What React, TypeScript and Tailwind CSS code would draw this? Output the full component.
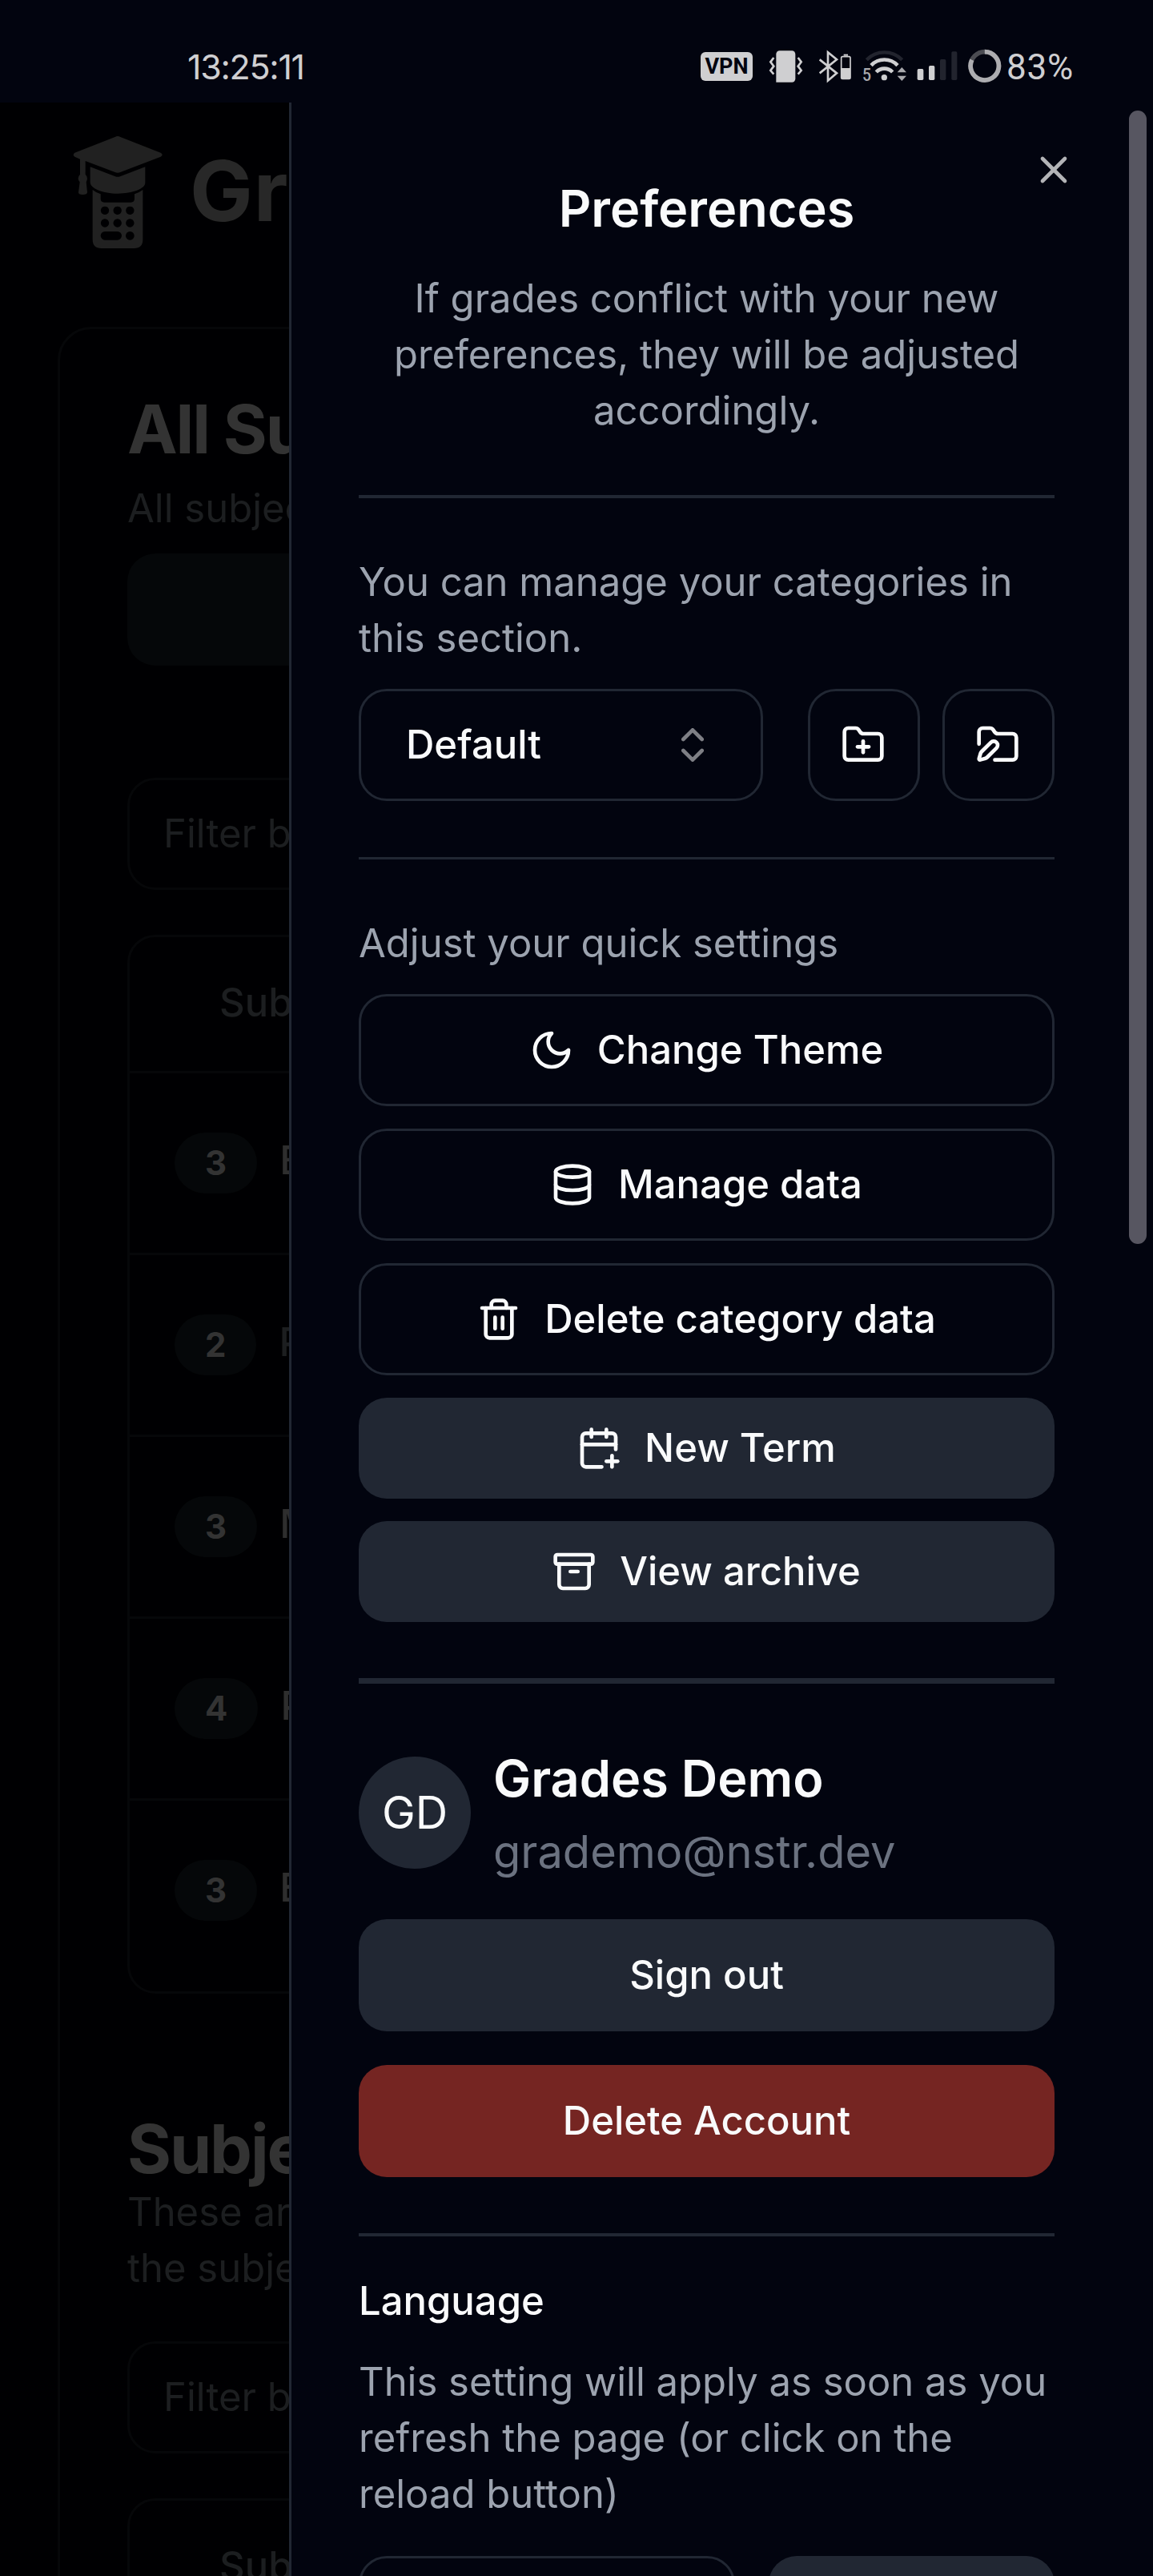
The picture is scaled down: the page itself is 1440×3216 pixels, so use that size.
import type { ReactNode } from "react";
import {
  Archive,
  CalendarPlus,
  ChevronsUpDown,
  Database,
  FolderPen,
  FolderPlus,
  Trash2,
  X,
} from "lucide-react";

const LIGHT = "#cfcfd1";
const DIM = "#22242e";

function StatusBar() {
  return (
    <header className="flex h-[128px] shrink-0 items-start bg-[#02040f] pl-[234px] pt-[60px] text-[#cfcfd1]">
      <span className="mt-px w-[641px] font-[Inter] text-[43px] leading-[44px] tracking-[-1.300px]">13:25:11</span>
      <span className="mt-[5px] flex h-[36px] w-[65px] items-center justify-center rounded-[6px] bg-[#cfcfd1] font-[Roboto] text-[27px] font-bold leading-none text-[#02040f]">
        VPN
      </span>
      <svg className="ml-[20px] h-[45px] w-[43px]" viewBox="285 30 129 135" fill="none">
        <path d="M326 40h46a13 13 0 0 1 13 13v92a13 13 0 0 1-13 13h-59V53a13 13 0 0 1 13-13Z" fill={LIGHT} />
        <path d="M304 66l-12 16 12 16-12 16 12 14M395 66l12 16-12 16 12 16-12 14" stroke={LIGHT} strokeWidth="8" />
      </svg>
      <svg className="ml-[18px] h-[45px] w-[43px]" viewBox="468 30 129 135" fill="none">
        <path d="M476 73l64 51-33 28V46l33 27-64 51" stroke={LIGHT} strokeWidth="8" />
        <rect x="557" y="62" width="34" height="83" rx="5" stroke={LIGHT} strokeWidth="5" />
        <rect x="566" y="53" width="16" height="6" fill={LIGHT} />
        <path d="M557 105h34v39h-34z" fill={LIGHT} />
      </svg>
      <svg className="ml-[12px] h-[45px] w-[58px]" viewBox="633 30 174 135" fill="none">
        <path d="M652 74a93 93 0 0 1 133 0" stroke={DIM} strokeWidth="13" />
        <path d="M669 95a68 68 0 0 1 99 0" stroke={LIGHT} strokeWidth="14" />
        <path d="M688 120a42 42 0 0 1 61 0" stroke={LIGHT} strokeWidth="14" />
        <circle cx="718" cy="140" r="11" fill={LIGHT} />
        <path d="M784 102l17 19h-34zM784 153l-17-19h34z" fill="#a9a9ad" />
        <text x="636" y="153" fontFamily="Roboto" fontWeight="500" fontSize="64" textLength="33" lengthAdjust="spacingAndGlyphs" fill="#a9a9ad">5</text>
      </svg>
      <svg className="ml-[10px] h-[45px] w-[54px]" viewBox="836 30 162 135">
        <rect x="841" y="108" width="23" height="42" rx="5" fill={LIGHT} />
        <rect x="884" y="96" width="22" height="54" rx="5" fill={LIGHT} />
        <rect x="926" y="72" width="22" height="78" rx="5" fill={DIM} />
        <rect x="969" y="43" width="21" height="107" rx="5" fill={DIM} />
      </svg>
      <svg className="ml-[10px] h-[45px] w-[44px]" viewBox="1028 30 132 135" fill="none">
        <circle cx="1093.500" cy="97" r="53" stroke="#4b4c52" strokeWidth="17" />
        <path d="M1093.500 44a53 53 0 1 1-48 30" stroke="#adadb0" strokeWidth="17" />
      </svg>
      <span className="ml-[5px] mt-[2px] font-[Roboto] text-[44px] leading-[44px] tracking-[0.800px]">83%</span>
    </header>
  );
}

function Logo() {
  return (
    <svg className="h-[160px] w-[140px] shrink-0" viewBox="0 0 420 480" fill="#212121">
      <path d="M191 33q10-6 20 0l151 59q12 7 0 15l-151 58q-10 5-20 0L80 123v50q8 8 7 16-1 8-4 13l4 38q0 9-17 9t-16-9l5-38q-6-6-6-14t7-15v-57l-20-9q-10-7 0-15Z" />
      <path d="M98 145l94 36q9 3 18 0l94-36v60c0 22-48 40-103 40S98 225 98 203Z" />
      <path
        fillRule="evenodd"
        d="M107 231q12 10 30 16v17q0 14 14 14h99q14 0 14-14v-17q18-6 31-16v186q0 33-33 33H140q-33 0-33-33ZM153 293a15.500 15.500 0 1 0 .1 0ZM200 293a15.500 15.500 0 1 0 .1 0ZM247 293a15.500 15.500 0 1 0 .1 0ZM153 340a15.500 15.500 0 1 0 .1 0ZM200 340a15.500 15.500 0 1 0 .1 0ZM247 340a15.500 15.500 0 1 0 .1 0ZM153 387a16 16 0 0 0 0 32h47a16 16 0 0 0 0-32ZM247 387a16 16 0 1 0 .1 0Z"
      />
    </svg>
  );
}

const subjects = [
  { count: 3, name: "Biology", muted: false },
  { count: 2, name: "Physics", muted: true },
  { count: 3, name: "Maths", muted: false },
  { count: 4, name: "Physics", muted: false },
  { count: 3, name: "English", muted: false },
];

function FilterInput() {
  return (
    <div className="flex h-[140px] shrink-0 items-center rounded-[35px] border-[3px] border-[#060709] pl-[42px] text-[49px] text-[#1c1e20]">
      Filter by subject
    </div>
  );
}

function DimmedPage() {
  return (
    <main className="flex w-[361px] shrink-0 flex-col overflow-hidden bg-[#000002] whitespace-nowrap">
      <div className="flex w-[1360px] shrink-0 pl-[80px] pt-[32px]">
        <Logo />
        <span className="ml-[17px] mt-[18px] text-[105px] font-bold leading-[120px] tracking-[1px] text-[#282828]">
          Grades
        </span>
      </div>
      <section className="ml-[72px] mt-[88px] flex h-[3200px] w-[1296px] shrink-0 flex-col rounded-[42px] border-[3px] border-[#060709] px-[84px]">
        <h2 className="mt-[74px] h-[114px] shrink-0 text-[84px] font-bold leading-[102px] tracking-[-2.100px] text-[#333]">
          All Subjects
        </h2>
        <p className="h-[92px] shrink-0 text-[49px] leading-[71px] text-[#1c1e20]">All subjects and their averages</p>
        <div className="h-[140px] shrink-0 rounded-[35px] bg-[#050709]" />
        <div className="h-[140px] shrink-0" />
        <FilterInput />
        <div className="mt-[56px] h-[1322px] shrink-0 rounded-[35px] border-[3px] border-[#060709]">
          <div className="h-[170px] border-b-[3px] border-[#060709] pl-[112px] pt-[47px] text-[49px] font-medium leading-[70px] text-[#1c1e20]">
            Subject
          </div>
          {subjects.map((s, i) => (
            <div key={i} className={i < 4 ? "flex h-[227px] items-center border-b-[3px] border-[#060709] pl-[56px]" : "flex h-[224px] items-center pl-[56px]"}>
              <span className="rounded-full bg-[#050709] px-[38px] py-[10px] text-[42px] font-bold leading-[56px] text-[#333]">
                {s.count}
              </span>
              <span className={s.muted ? "mb-[6px] ml-[28px] text-[49px] font-medium text-[#1c1e20]" : "mb-[6px] ml-[28px] text-[49px] font-medium text-[#2e2e2e]"}>
                {s.name}
              </span>
            </div>
          ))}
        </div>
        <h2 className="mt-[143px] h-[95px] shrink-0 text-[84px] font-bold leading-[102px] tracking-[-2.100px] text-[#333]">
          Subjects
        </h2>
        <p className="h-[196px] shrink-0 text-[49px] leading-[70px] text-[#1c1e20]">
          These are the averages of
          <br />
          the subjects over time
        </p>
        <FilterInput />
        <div className="mt-[56px] h-[600px] shrink-0 rounded-[35px] border-[3px] border-[#060709] pl-[112px] pt-[47px] text-[49px] font-medium leading-[70px] text-[#1c1e20]">
          Subject
        </div>
      </section>
    </main>
  );
}

function Moon() {
  return (
    <svg className="size-[56px]" viewBox="0 0 24 24" fill="none" stroke="currentColor" strokeWidth="2" strokeLinecap="round" strokeLinejoin="round">
      <path d="M12 3a6 6 0 0 0 9 9 9 9 0 1 1-9-9Z" />
    </svg>
  );
}

function Separator() {
  return <div className="h-[3.500px] shrink-0 bg-[#212733]" />;
}

function OutlineButton({ icon, children }: { icon: ReactNode; children: ReactNode }) {
  return (
    <button className="flex h-[140px] shrink-0 items-center justify-center gap-[28px] rounded-[35px] border-[3px] border-[#212733] font-medium [&>svg]:-ml-px [&>svg]:mr-px">
      {icon}
      {children}
    </button>
  );
}

function SolidButton({ icon, children }: { icon: ReactNode; children: ReactNode }) {
  return (
    <button className="flex h-[126px] shrink-0 items-center justify-center gap-[28px] rounded-[35px] bg-[#212733] font-medium [&>svg]:-ml-px [&>svg]:mr-px">
      {icon}
      {children}
    </button>
  );
}

function PreferencesSheet() {
  return (
    <aside className="relative flex flex-1 flex-col overflow-hidden border-l-[3px] border-[#212733] bg-[#02040f] pl-[84px] pr-[123px] pt-[84px] text-[49px] leading-[70px] text-[#f9fafb]">
      <X className="absolute right-[96px] top-[56px] size-[56px] text-[#b3b4b7]" />
      <div className="absolute right-[8px] top-[10px] h-[1415px] w-[22px] rounded-full bg-[#575661]" />

      <h1 className="mb-[2px] text-center text-[63px] font-semibold leading-[96px]">Preferences</h1>
      <p className="mb-[70px] mt-[28px] text-center text-[#9ca3af]">
        If grades conflict with your new
        <br />
        preferences, they will be adjusted
        <br />
        accordingly.
      </p>
      <Separator />

      <p className="mb-[28px] mt-[70px] text-[#9ca3af]">
        You can manage your categories in
        <br />
        this section.
      </p>
      <div className="mb-[70px] flex h-[140px] shrink-0">
        <button className="flex w-[505px] items-center justify-between rounded-[35px] border-[3px] border-[#212733] pl-[56px] pr-[57px] font-medium">
          Default
          <ChevronsUpDown className="size-[56px] opacity-50" />
        </button>
        <button className="ml-[56px] flex w-[140px] items-center justify-center rounded-[35px] border-[3px] border-[#212733]">
          <FolderPlus className="mr-[2px] size-[56px]" />
        </button>
        <button className="ml-[28px] flex w-[140px] items-center justify-center rounded-[35px] border-[3px] border-[#212733]">
          <FolderPen className="mr-[2px] size-[56px]" />
        </button>
      </div>
      <Separator />

      <p className="mb-[28px] mt-[70px] text-[#9ca3af]">Adjust your quick settings</p>
      <div className="mb-[70px] flex flex-col gap-[28px]">
        <OutlineButton icon={<Moon />}>Change Theme</OutlineButton>
        <OutlineButton icon={<Database className="size-[56px]" />}>Manage data</OutlineButton>
        <OutlineButton icon={<Trash2 className="size-[56px]" />}>Delete category data</OutlineButton>
        <SolidButton icon={<CalendarPlus className="size-[56px]" />}>New Term</SolidButton>
        <SolidButton icon={<Archive className="size-[56px]" />}>View archive</SolidButton>
      </div>
      <Separator />
      <Separator />

      <div className="mb-[42px] mt-[70px] flex items-center gap-[28px]">
        <div className="flex size-[140px] items-center justify-center rounded-full bg-[#212733] text-[56px]">GD</div>
        <div>
          <div className="mb-[2px] text-[63px] font-semibold leading-[96px]">Grades Demo</div>
          <div className="text-[56px] leading-[84px] text-[#6b7280]">grademo@nstr.dev</div>
        </div>
      </div>
      <button className="mb-[42px] h-[140px] shrink-0 rounded-[35px] bg-[#212733] font-medium">Sign out</button>
      <button className="mb-[70px] h-[140px] shrink-0 rounded-[35px] bg-[#752522] font-medium">Delete Account</button>
      <Separator />

      <h2 className="mt-[46px] font-medium">Language</h2>
      <p className="mb-[42px] mt-[31px] whitespace-nowrap text-[#9ca3af]">
        This setting will apply as soon as you
        <br />
        refresh the page (or click on the
        <br />
        reload button)
      </p>
      <div className="flex h-[140px] shrink-0 gap-[42px]">
        <div className="w-[470px] rounded-[35px] border-[3px] border-[#212733]" />
        <div className="flex-1 rounded-[35px] bg-[#212733]" />
      </div>
    </aside>
  );
}

export default function App() {
  return (
    <div className="flex h-[3216px] w-[1440px] flex-col overflow-hidden bg-[#02040f] font-[Inter,sans-serif]">
      <StatusBar />
      <div className="flex min-h-0 flex-1">
        <DimmedPage />
        <PreferencesSheet />
      </div>
    </div>
  );
}
